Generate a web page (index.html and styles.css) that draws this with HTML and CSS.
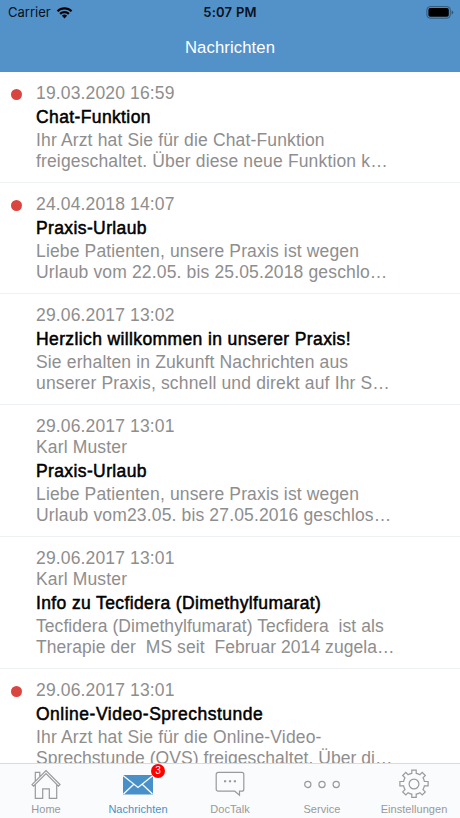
FILE: index.html
```html
<!DOCTYPE html>
<html lang="de">
<head>
<meta charset="utf-8">
<title>Nachrichten</title>
<link rel="stylesheet" href="styles.css">
</head>
<body>
<div class="app">
  <header class="header">
    <div class="status">
      <div class="carrier"><span>Carrier</span>
        <svg width="17" height="13" viewBox="0 0 17 13"><path d="M.7 4.4a11.2 11.2 0 0 1 15.6 0l-1.6 1.7a9 9 0 0 0-12.4 0zM3.3 7a7.5 7.5 0 0 1 10.4 0l-1.6 1.7a5.3 5.3 0 0 0-7.2 0zM5.9 9.7a3.8 3.8 0 0 1 5.2 0L8.5 12.4z"/></svg>
      </div>
      <div class="time">5:07 PM</div>
      <div class="battery"><svg width="28" height="13" viewBox="0 0 28 13"><rect x=".9" y=".6" width="23.4" height="11.6" rx="3.2" fill="none" stroke="#315978"/><rect x="2.4" y="2.1" width="20.4" height="8.6" rx="1.8"/><path d="M25.6 4.4q1.7.6 1.7 2t-1.7 2z" fill="#315978"/></svg></div>
    </div>
    <h1 class="heading">Nachrichten</h1>
  </header>
  <main class="messages">
    <article class="message unread">
      <p class="meta">19.03.2020 16:59</p>
      <h2 class="title">Chat-Funktion</h2>
      <p class="body">Ihr Arzt hat Sie für die Chat-Funktion<br>freigeschaltet. Über diese neue Funktion k…</p>
    </article>
    <article class="message unread">
      <p class="meta">24.04.2018 14:07</p>
      <h2 class="title">Praxis-Urlaub</h2>
      <p class="body">Liebe Patienten, unsere Praxis ist wegen<br>Urlaub vom 22.05. bis 25.05.2018 geschlo…</p>
    </article>
    <article class="message">
      <p class="meta">29.06.2017 13:02</p>
      <h2 class="title">Herzlich willkommen in unserer Praxis!</h2>
      <p class="body">Sie erhalten in Zukunft Nachrichten aus<br>unserer Praxis, schnell und direkt auf Ihr S…</p>
    </article>
    <article class="message">
      <p class="meta">29.06.2017 13:01</p>
      <p class="meta">Karl Muster</p>
      <h2 class="title">Praxis-Urlaub</h2>
      <p class="body">Liebe Patienten, unsere Praxis ist wegen<br>Urlaub vom23.05. bis 27.05.2016 geschlos…</p>
    </article>
    <article class="message">
      <p class="meta">29.06.2017 13:01</p>
      <p class="meta">Karl Muster</p>
      <h2 class="title">Info zu Tecfidera (Dimethylfumarat)</h2>
      <p class="body tight">Tecfidera (Dimethylfumarat) Tecfidera&nbsp; ist als<br>Therapie der&nbsp; MS seit&nbsp; Februar 2014 zugela…</p>
    </article>
    <article class="message unread">
      <p class="meta">29.06.2017 13:01</p>
      <h2 class="title wide">Online-Video-Sprechstunde</h2>
      <p class="body">Ihr Arzt hat Sie für die Online-Video-<br><span class="tight">Sprechstunde (OVS) freigeschaltet. Über di…</span></p>
    </article>
  </main>
  <nav class="tabs">
    <a class="tab"><svg width="32" height="34" viewBox="0 0 32 34"><path d="M2 17.6 16 3.6l14 14-1.5 1.5L16 6.6 3.500 19.100zM5.300 14.300V5.400h4.500v4.400M5.300 17.400V31.300h7.400v-9.400h6.600v9.400h7.400V17.400"/></svg><span>Home</span></a>
    <a class="tab active"><span class="mail"><svg width="32" height="34" viewBox="0 0 32 34"><path class="solid" d="M1 8h30v19.500H1z"/><path class="fold" d="m1 8.500 15 12 15-12M1.500 27l10.300-9.700M30.500 27l-10.300-9.700"/></svg><b class="badge">3</b></span><span>Nachrichten</span></a>
    <a class="tab"><svg width="32" height="34" viewBox="0 0 32 34"><path d="M4.200 5.400h23.600a2 2 0 0 1 2 2v14.800a2 2 0 0 1-2 2h-2.300v3.900l-4.700-3.900H4.200a2 2 0 0 1-2-2V7.400a2 2 0 0 1 2-2z"/><path class="dots" d="M10 14.200h2.200m2.700 0h2.200m2.700 0H22"/></svg><span>DocTalk</span></a>
    <a class="tab"><svg width="38" height="34" viewBox="0 0 38 34"><circle cx="4.800" cy="17.500" r="3.100"/><circle cx="19" cy="17.500" r="3.100"/><circle cx="33.200" cy="17.500" r="3.100"/></svg><span>Service</span></a>
    <a class="tab"><svg width="32" height="34" viewBox="0 0 32 34"><path d="M13.800 3.100h4.400v3.200q2 .4 3.700 1.400l2.300-2.300 3.100 3.100-2.300 2.300q1 1.700 1.400 3.700h3.700v4.400h-3.700q-.4 2-1.400 3.700l2.300 2.300-3.100 3.100-2.300-2.300q-1.700 1-3.700 1.400v3.200h-4.400v-3.200q-2-.4-3.700-1.400l-2.300 2.300-3.100-3.100L7 22.600q-1-1.700-1.400-3.700H1.900v-4.400h3.700q.4-2 1.400-3.700L4.700 8.500l3.100-3.100 2.300 2.300q1.700-1 3.700-1.400z"/><circle cx="16" cy="17" r="4.900"/></svg><span>Einstellungen</span></a>
  </nav>
</div>
</body>
</html>
```
FILE: styles.css
```css
* { box-sizing: border-box; }
body { margin: 0; background: #fff; font-family: "Liberation Sans", Arial, sans-serif; }
h1, h2, p { margin: 0; font-weight: 400; }
.app { width: 460px; height: 818px; display: flex; flex-direction: column; overflow: hidden; }
.header { flex: 0 0 71px; background: #5391c9; }
.status { height: 24px; display: grid; grid-template-columns: 1fr auto 1fr; align-items: center; padding: 0 6px 0 8px; font: 500 13px Inter, sans-serif; color: #06111c; }
.carrier { display: flex; align-items: center; gap: 5px; font-weight: 400; letter-spacing: 0; }
.time { font-weight: 600; letter-spacing: .25px; margin-left: -2px; }
.battery { display: flex; justify-content: flex-end; }
.heading { color: #fff; font-size: 16.7px; line-height: 48px; text-align: center; letter-spacing: .1px; }
.messages { flex: 1; min-height: 0; overflow: hidden; }
.message { position: relative; padding: 11px 20px 11px 36px; border-bottom: 1px solid #edf1f4; white-space: nowrap; }
.unread::before { content: ""; position: absolute; left: 11px; top: 17px; width: 11px; height: 11px; border-radius: 50%; background: #d9463f; }
.meta, .body { color: #8e8e8e; font-size: 17.5px; line-height: 21px; letter-spacing: .15px; }
.title { color: #000; font-size: 17.5px; line-height: 27px; letter-spacing: .38px; -webkit-text-stroke: .5px #000; }
.title.wide { letter-spacing: .5px; }
.body { line-height: 20.5px; margin-top: -1px; }
.tight { letter-spacing: .06px; }
.tabs { flex: 0 0 55px; display: grid; grid-template-columns: repeat(5, 92px); background: #f9fbfc; border-top: 1px solid #d9dcde; }
.tab { display: flex; flex-direction: column; align-items: center; padding-top: 3px; color: #999; font-size: 11px; line-height: 17px; letter-spacing: .05px; }
.tab svg { display: block; fill: none; stroke: #989a9c; stroke-width: 1.2; }
.tab.active { color: #4a90c8; }
.mail { position: relative; }
.tab .solid { fill: #4a90c8; stroke: none; }
.tab .fold { stroke: #f9fbfc; stroke-width: 1.3; }
.tab .dots { stroke-width: 2; }
.badge { position: absolute; left: 29px; top: -3px; width: 14px; height: 14px; border-radius: 50%; background: #f00; color: #fff; font-size: 10px; font-weight: 400; line-height: 14px; text-align: center; }
```
